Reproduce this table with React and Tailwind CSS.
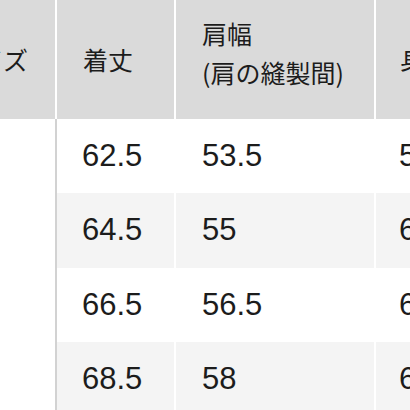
const rows = [
  ['S', '62.5', '53.5', '55'],
  ['M', '64.5', '55', '60'],
  ['L', '66.5', '56.5', '63'],
  ['XL', '68.5', '58', '66'],
];

const cjk = { fontFamily: '"Noto Sans CJK JP", "Noto Sans", sans-serif' };
const num = { fontFamily: '"Liberation Sans", Arial, sans-serif' };

export default function App() {
  return (
    <div className="h-[410px] w-[410px] overflow-hidden bg-white text-[#1c1c1c]">
      <div className="ml-[-140px] w-[800px]">
        <div className="flex h-[119px] bg-[#dadada] text-[25px]" style={cjk}>
          <div className="flex w-[197px] items-center justify-end border-r-2 border-white pr-[27px]">サイズ</div>
          <div className="flex w-[119px] items-center border-r-2 border-white pl-[26px]">着丈</div>
          <div className="w-[200px] border-r-2 border-white pl-[26px] pt-[14px] leading-[39px]">
            <div>肩幅</div>
            <div>(肩の縫製間)</div>
          </div>
          <div className="flex w-[200px] items-center pl-[24px]">身幅</div>
        </div>
        {rows.map((row, i) => (
          <div
            key={row[0]}
            className={`flex text-[31px] ${i === 1 ? 'h-[75px]' : 'h-[74px]'} ${i % 2 ? 'bg-[#f4f4f4]' : 'bg-white'}`}
            style={num}
          >
            <div className="flex w-[197px] items-center border-r-2 border-[#d2d2d2] pl-[20px] bg-white">{row[0]}</div>
            <div className="flex w-[119px] items-center border-r-2 border-white pl-[25px]">{row[1]}</div>
            <div className="flex w-[200px] items-center border-r-2 border-white pl-[26px]">{row[2]}</div>
            <div className="flex w-[200px] items-center pl-[23px]">{row[3]}</div>
          </div>
        ))}
      </div>
    </div>
  );
}
